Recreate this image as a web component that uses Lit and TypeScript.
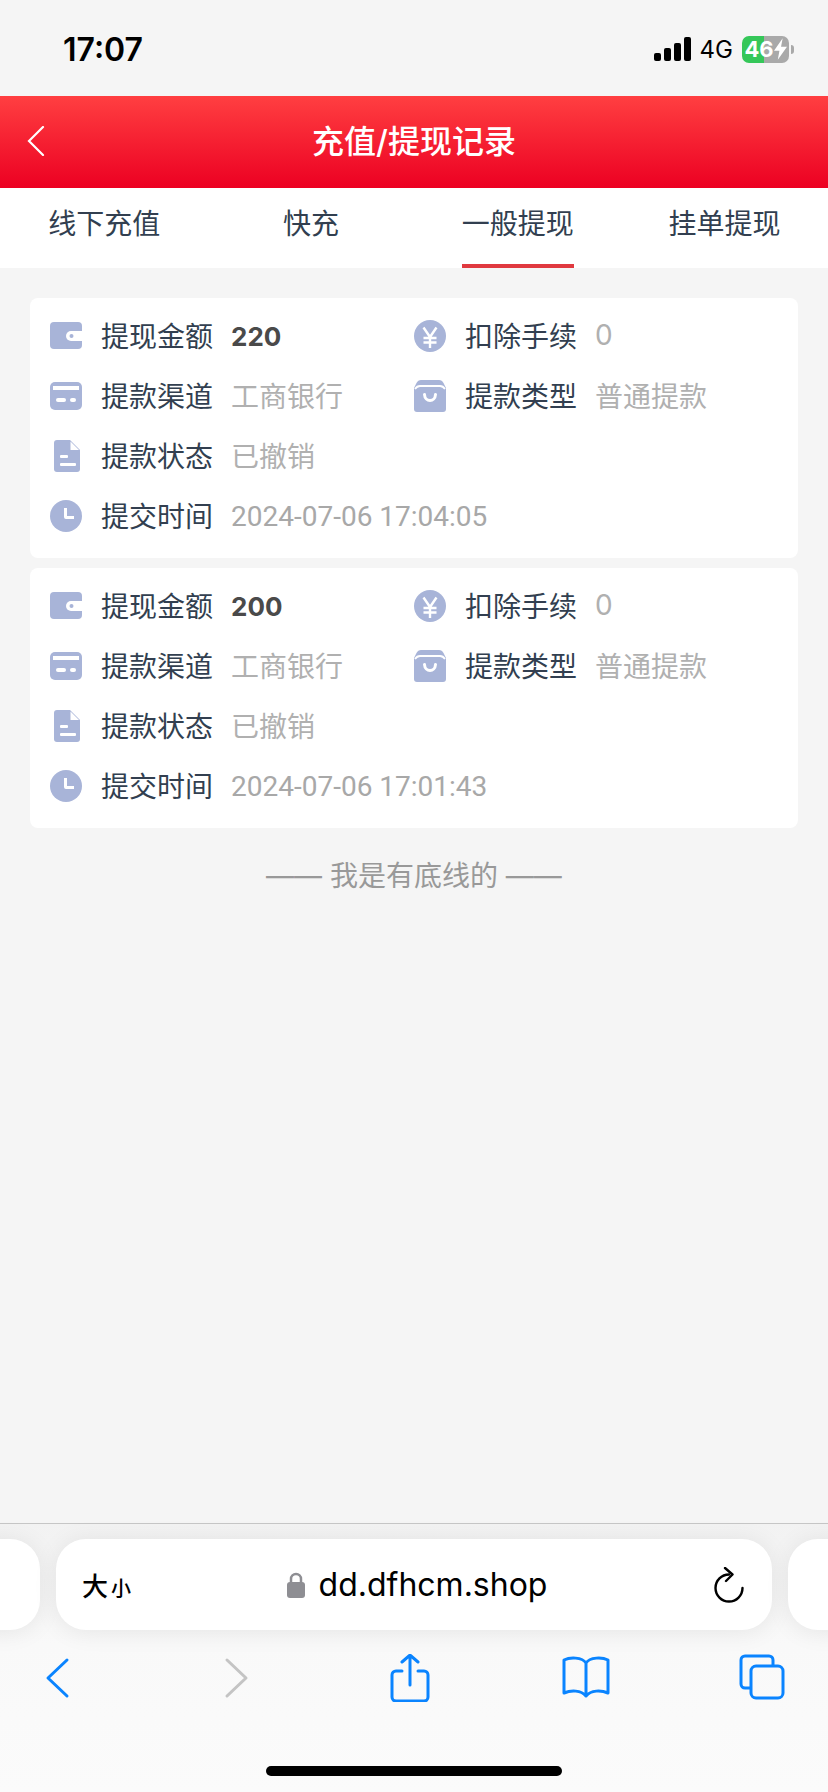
import { LitElement, html, css, svg } from 'lit';
import { customElement } from 'lit/decorators.js';

const ICON = '#a8b4d8';
const BLUE = '#0a84ff';

const icons = {
  wallet: svg`<rect y="2" width="32" height="27" rx="4" fill="${ICON}"/>
    <path fill="#fff" d="M21 11h11v10H21a5 5 0 0 1 0-10z"/><circle cx="21.500" cy="16" r="2" fill="${ICON}"/>`,
  card: svg`<rect y="2" width="32" height="28" rx="5" fill="${ICON}"/><rect x="3" y="6" width="26" height="4" fill="#fff"/>
    <rect x="6" y="18" width="10" height="4" rx="2" fill="#fff"/><rect x="20" y="18" width="6" height="4" rx="2" fill="#fff"/>`,
  doc: svg`<path fill="${ICON}" d="M7 0h13l10 10v19a3 3 0 0 1-3 3H7a3 3 0 0 1-3-3V3a3 3 0 0 1 3-3z"/>
    <path fill="#fff" d="M20.500 1.500V10h8.500z"/><rect x="10" y="15" width="8" height="3" rx="1" fill="#fff"/><rect x="10" y="23" width="16" height="3" rx="1" fill="#fff"/>`,
  clock: svg`<circle cx="16" cy="16" r="16" fill="${ICON}"/><path fill="#fff" d="M14 8h3v8h7v3H16a2 2 0 0 1-2-2z"/>`,
  yen: svg`<circle cx="16" cy="16" r="16" fill="${ICON}"/><path fill="none" stroke="#fff" stroke-width="2.400" d="M9.500 7.500 16 17l6.500-9.500M9.500 18h13M9.500 22.500h13M16 17v11"/>`,
  bag: svg`<path fill="${ICON}" d="M7 0h18c2 0 3.500 1 4.500 3L32 8v21a3 3 0 0 1-3 3H3a3 3 0 0 1-3-3V8l2.500-5C3.500 1 5 0 7 0z"/>
    <path fill="none" stroke="#fff" stroke-width="1.800" d="M1 9q2-3 5-3h20q3 0 5 3"/>
    <path fill="none" stroke="#fff" stroke-width="3" stroke-linecap="round" d="M10.500 14.500c.5 8 10.500 8 11 0"/>`,
};

type IconName = keyof typeof icons;

interface Field {
  icon: IconName;
  label: string;
  value: string;
  kind?: 'amount' | 'wide';
}

const record = (amount: string, time: string): Field[] => [
  { icon: 'wallet', label: '提现金额', value: amount, kind: 'amount' },
  { icon: 'yen', label: '扣除手续', value: '0' },
  { icon: 'card', label: '提款渠道', value: '工商银行' },
  { icon: 'bag', label: '提款类型', value: '普通提款' },
  { icon: 'doc', label: '提款状态', value: '已撤销', kind: 'wide' },
  { icon: 'clock', label: '提交时间', value: time, kind: 'wide' },
];

const records = [record('220', '2024-07-06 17:04:05'), record('200', '2024-07-06 17:01:43')];
const tabs = ['线下充值', '快充', '一般提现', '挂单提现'];

@customElement('app-root')
export class AppRoot extends LitElement {
  static styles = css`
    :host {
      display: flex;
      flex-direction: column;
      height: 1792px;
      background: #f5f5f5;
      font-family: Inter, "Noto Sans CJK SC", sans-serif;
      overflow: hidden;
    }
    svg { display: block; flex-shrink: 0; }

    .status {
      height: 96px;
      flex-shrink: 0;
      display: flex;
      align-items: center;
      padding: 2px 34px 0 63px;
      box-sizing: border-box;
    }
    .time { font-size: 32px; font-weight: 600; color: #000; letter-spacing: 0; }
    .status-right { margin-left: auto; display: flex; align-items: center; margin-right: 0; }
    .signal { margin-right: 1px; }
    .net { font-size: 24px; color: #000; margin: 0 9px 0 8px; }
    .battery {
      width: 47px;
      height: 27px;
      border-radius: 7px;
      background: linear-gradient(90deg, #35c759 47%, #a9a9a9 47%);
      color: #fff;
      font-size: 22px;
      font-weight: 700;
      display: flex;
      align-items: center;
      justify-content: center;
    }
    .nub { width: 3px; height: 9px; margin-left: 2px; background: #a9a9a9; border-radius: 0 3px 3px 0; }

    .nav {
      height: 92px;
      flex-shrink: 0;
      box-sizing: border-box;
      padding-bottom: 7px;
      background: linear-gradient(180deg, #ff3f41, #ec0022);
      display: flex;
      align-items: center;
      justify-content: center;
      color: #fff;
      font-size: 32px;
      font-weight: 500;
      position: relative;
    }
    .back { position: absolute; left: 27px; top: 30px; }

    .tabs {
      height: 80px;
      flex-shrink: 0;
      box-sizing: border-box;
      padding-left: 1px;
      background: #fff;
      display: grid;
      grid-template-columns: repeat(4, 1fr);
    }
    .tab { display: flex; justify-content: center; font-size: 28px; color: #323f50; }
    .tab span {
      height: 76px;
      line-height: 72px;
    }
    .tab.active span { border-bottom: 4px solid #e0393f; }

    .list {
      flex: 1;
      padding: 30px 30px 0;
      display: flex;
      flex-direction: column;
      gap: 10px;
    }
    .card {
      background: #fff;
      border-radius: 8px;
      padding: 8px 20px 12px;
      display: grid;
      grid-template-columns: 364px 1fr;
      grid-auto-rows: 60px;
    }
    .field { display: flex; align-items: center; font-size: 28px; }
    .field.wide { grid-column: span 2; }
    .label { color: #323f50; margin: 0 18px 0 19px; padding-bottom: 2px; }
    .value { color: #b0b0b0; padding-bottom: 2px; }
    .value.time-val {
      font-family: Roboto, sans-serif;
      font-size: 28px;
      color: #a8a8a8;
      padding-bottom: 0;
    }
    .amount { color: #4a4a4a; font-weight: 700; font-size: 26px; }
    .end { margin-top: 18px; text-align: center; font-size: 28px; line-height: 40px; color: #999; }

    .toolbar {
      height: 269px;
      flex-shrink: 0;
      box-sizing: border-box;
      border-top: 1px solid #c6c6c6;
      background: linear-gradient(180deg, #f2f2f2, #f9f9f9 45%, #fbfbfb);
      padding-top: 15px;
      display: flex;
      flex-direction: column;
    }
    .pills { display: flex; justify-content: center; gap: 16px; }
    .pill {
      width: 716px;
      height: 91px;
      flex-shrink: 0;
      background: #fff;
      border-radius: 30px;
      box-shadow: 0 2px 24px rgba(0, 0, 0, 0.08);
      box-sizing: border-box;
    }
    .address { display: flex; align-items: center; padding: 0 28px 0 26px; }
    .aa { color: #000; font-weight: 500; font-size: 26px; width: 48px; white-space: nowrap; }
    .aa small { font-size: 20px; margin-left: 3px; }
    .url {
      flex: 1;
      display: flex;
      align-items: center;
      justify-content: center;
      gap: 14px;
      font-size: 32px;
      color: #000;
      padding-right: 10px;
    }
    .actions {
      display: flex;
      justify-content: space-between;
      padding: 24px 42px 0 33px;
    }
    .home {
      width: 296px;
      height: 10px;
      border-radius: 5px;
      background: #000;
      align-self: center;
      margin-top: 64px;
    }
  `;

  private field(f: Field) {
    const cls = f.kind === 'amount' ? 'amount' : f.value.startsWith('2024') ? 'value time-val' : 'value';
    return html`<div class="field ${f.kind === 'wide' ? 'wide' : ''}">
      <svg width="32" height="32" viewBox="0 0 32 32">${icons[f.icon]}</svg>
      <span class="label">${f.label}</span>
      <span class="${cls}">${f.value}</span>
    </div>`;
  }

  render() {
    return html`
      <div class="status">
        <span class="time">17:07</span>
        <div class="status-right">
          <svg class="signal" width="37" height="24" viewBox="0 0 37 24" fill="#000">
            <rect x="0" y="16" width="7" height="8" rx="2"/>
            <rect x="10" y="11" width="7" height="13" rx="2"/>
            <rect x="20" y="6" width="7" height="18" rx="2"/>
            <rect x="30" y="0" width="7" height="24" rx="2"/>
          </svg>
          <span class="net">4G</span>
          <div class="battery">46<svg width="13" height="22" viewBox="0 0 12 20" fill="#fff"><path d="M8 0 0 11.500h5L3.500 20 12 8H6.500z"/></svg></div>
          <div class="nub"></div>
        </div>
      </div>

      <div class="nav">
        <svg class="back" width="18" height="30" viewBox="0 0 18 30" fill="none" stroke="#fff" stroke-width="2.200" stroke-linecap="round"><path d="M16 1 2 15l14 14"/></svg>
        充值/提现记录
      </div>

      <div class="tabs">
        ${tabs.map((t, i) => html`<div class="tab ${i === 2 ? 'active' : ''}"><span>${t}</span></div>`)}
      </div>

      <div class="list">
        ${records.map((r) => html`<div class="card">${r.map((f) => this.field(f))}</div>`)}
        <div class="end">—— 我是有底线的 ——</div>
      </div>

      <div class="toolbar">
        <div class="pills">
          <div class="pill"></div>
          <div class="pill address">
            <span class="aa">大<small>小</small></span>
            <div class="url">
              <svg width="18" height="26" viewBox="0 0 18 26"><path fill="none" stroke="#8e8e93" stroke-width="2.500" d="M4 12V7a5 5 0 0 1 10 0v5"/><rect y="10" width="18" height="16" rx="3" fill="#8e8e93"/></svg>
              dd.dfhcm.shop
            </div>
            <svg width="30" height="36" viewBox="0 0 30 36" fill="none" stroke="#000" stroke-width="2.400" stroke-linecap="round" stroke-linejoin="round">
              <path d="M15 7.500A13.500 13.500 0 1 0 28.500 21"/><path d="m11 1 7.500 6.500L12 14"/>
            </svg>
          </div>
          <div class="pill"></div>
        </div>

        <div class="actions">
          <svg width="48" height="48" viewBox="0 0 48 48" fill="none" stroke="${BLUE}" stroke-width="3" stroke-linecap="round" stroke-linejoin="round"><path d="M34 6 15 24l19 18"/></svg>
          <svg width="48" height="48" viewBox="0 0 48 48" fill="none" stroke="#c4c4c4" stroke-width="3" stroke-linecap="round" stroke-linejoin="round"><path d="m18 6 19 18-19 18"/></svg>
          <svg width="48" height="48" viewBox="0 0 48 48" fill="none" stroke="${BLUE}" stroke-width="3" stroke-linecap="round" stroke-linejoin="round"><path d="M16 17h-6a4 4 0 0 0-4 4v22a4 4 0 0 0 4 4h28a4 4 0 0 0 4-4V21a4 4 0 0 0-4-4h-6M24 31V1M16 8l8-7 8 7"/></svg>
          <svg width="48" height="48" viewBox="0 0 48 48" fill="none" stroke="${BLUE}" stroke-width="3" stroke-linecap="round" stroke-linejoin="round"><path d="M24 9C20 3 8 3 2 6v33c7-3 17-3 22 3 5-6 15-6 22-3V6c-6-3-18-3-22 3zM24 9v33"/></svg>
          <svg width="48" height="48" viewBox="0 0 48 48" fill="none" stroke="${BLUE}" stroke-width="3" stroke-linejoin="round"><rect x="13" y="12" width="32" height="32" rx="5"/><path d="M13 34H7a4 4 0 0 1-4-4V6a4 4 0 0 1 4-4h24a4 4 0 0 1 4 4v6"/></svg>
        </div>
        <div class="home"></div>
      </div>
    `;
  }
}
